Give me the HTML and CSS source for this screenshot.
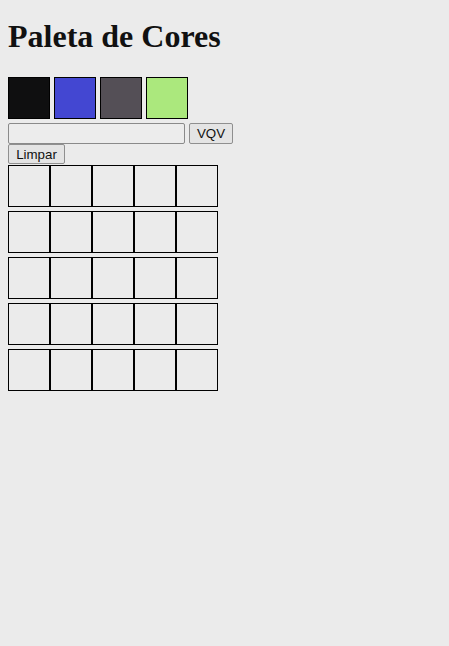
FILE: index.html
```html
<!DOCTYPE html>
<html lang="pt">
<head>
<meta charset="utf-8">
<title>Paleta de Cores</title>
<link rel="stylesheet" href="styles.css">
</head>
<body>
<h1 class="title">Paleta de Cores</h1>
<div class="palette">
  <div class="color c1"></div>
  <div class="color c2"></div>
  <div class="color c3"></div>
  <div class="color c4"></div>
</div>
<div class="controls">
  <input class="size-input" type="text">
  <button class="btn">VQV</button>
</div>
<button class="btn clear">Limpar</button>
<div class="board">
  <div class="row"><div class="pixel"></div><div class="pixel"></div><div class="pixel"></div><div class="pixel"></div><div class="pixel"></div></div>
  <div class="row"><div class="pixel"></div><div class="pixel"></div><div class="pixel"></div><div class="pixel"></div><div class="pixel"></div></div>
  <div class="row"><div class="pixel"></div><div class="pixel"></div><div class="pixel"></div><div class="pixel"></div><div class="pixel"></div></div>
  <div class="row"><div class="pixel"></div><div class="pixel"></div><div class="pixel"></div><div class="pixel"></div><div class="pixel"></div></div>
  <div class="row"><div class="pixel"></div><div class="pixel"></div><div class="pixel"></div><div class="pixel"></div><div class="pixel"></div></div>
</div>
</body>
</html>
```
FILE: styles.css
```css
html, body {
  background: #ebebeb;
}
body {
  margin: 8px;
  font-family: "Liberation Serif", serif;
  color: #111;
}
.title {
  font-family: "Liberation Serif", serif;
  font-size: 32px;
  font-weight: bold;
  line-height: 36px;
  margin: 10px 0 23px;
}
.palette {
  display: flex;
  gap: 4px;
}
.color {
  width: 40px;
  height: 40px;
  border: 1px solid #000;
}
.c1 { background: #0f0f10; }
.c2 { background: #4347d2; }
.c3 { background: #544f56; }
.c4 { background: #abe87d; }
.controls {
  display: flex;
  gap: 4px;
  margin-top: 4px;
}
.size-input {
  box-sizing: border-box;
  width: 177px;
  height: 21px;
  margin: 0;
  border: 1px solid #8a8a8a;
  border-radius: 2px;
  background: #ececec;
  padding: 1px 2px;
}
.btn {
  box-sizing: border-box;
  height: 21px;
  margin: 0;
  padding: 1px 6px;
  font-family: "Liberation Sans", Arial, sans-serif;
  font-size: 13.33px;
  color: #111;
  background: #e4e4e4;
  border: 1px solid #8f8f8f;
  border-radius: 2px;
}
.controls .btn {
  width: 44px;
}
.clear {
  display: block;
  width: 57px;
  height: 20px;
  margin-top: 0;
}
.board {
  display: flex;
  flex-direction: column;
  gap: 4px;
  margin-top: 1px;
}
.row {
  display: flex;
}
.pixel {
  width: 40px;
  height: 40px;
  border: 1px solid #000;
  background: #ebebeb;
}
```
